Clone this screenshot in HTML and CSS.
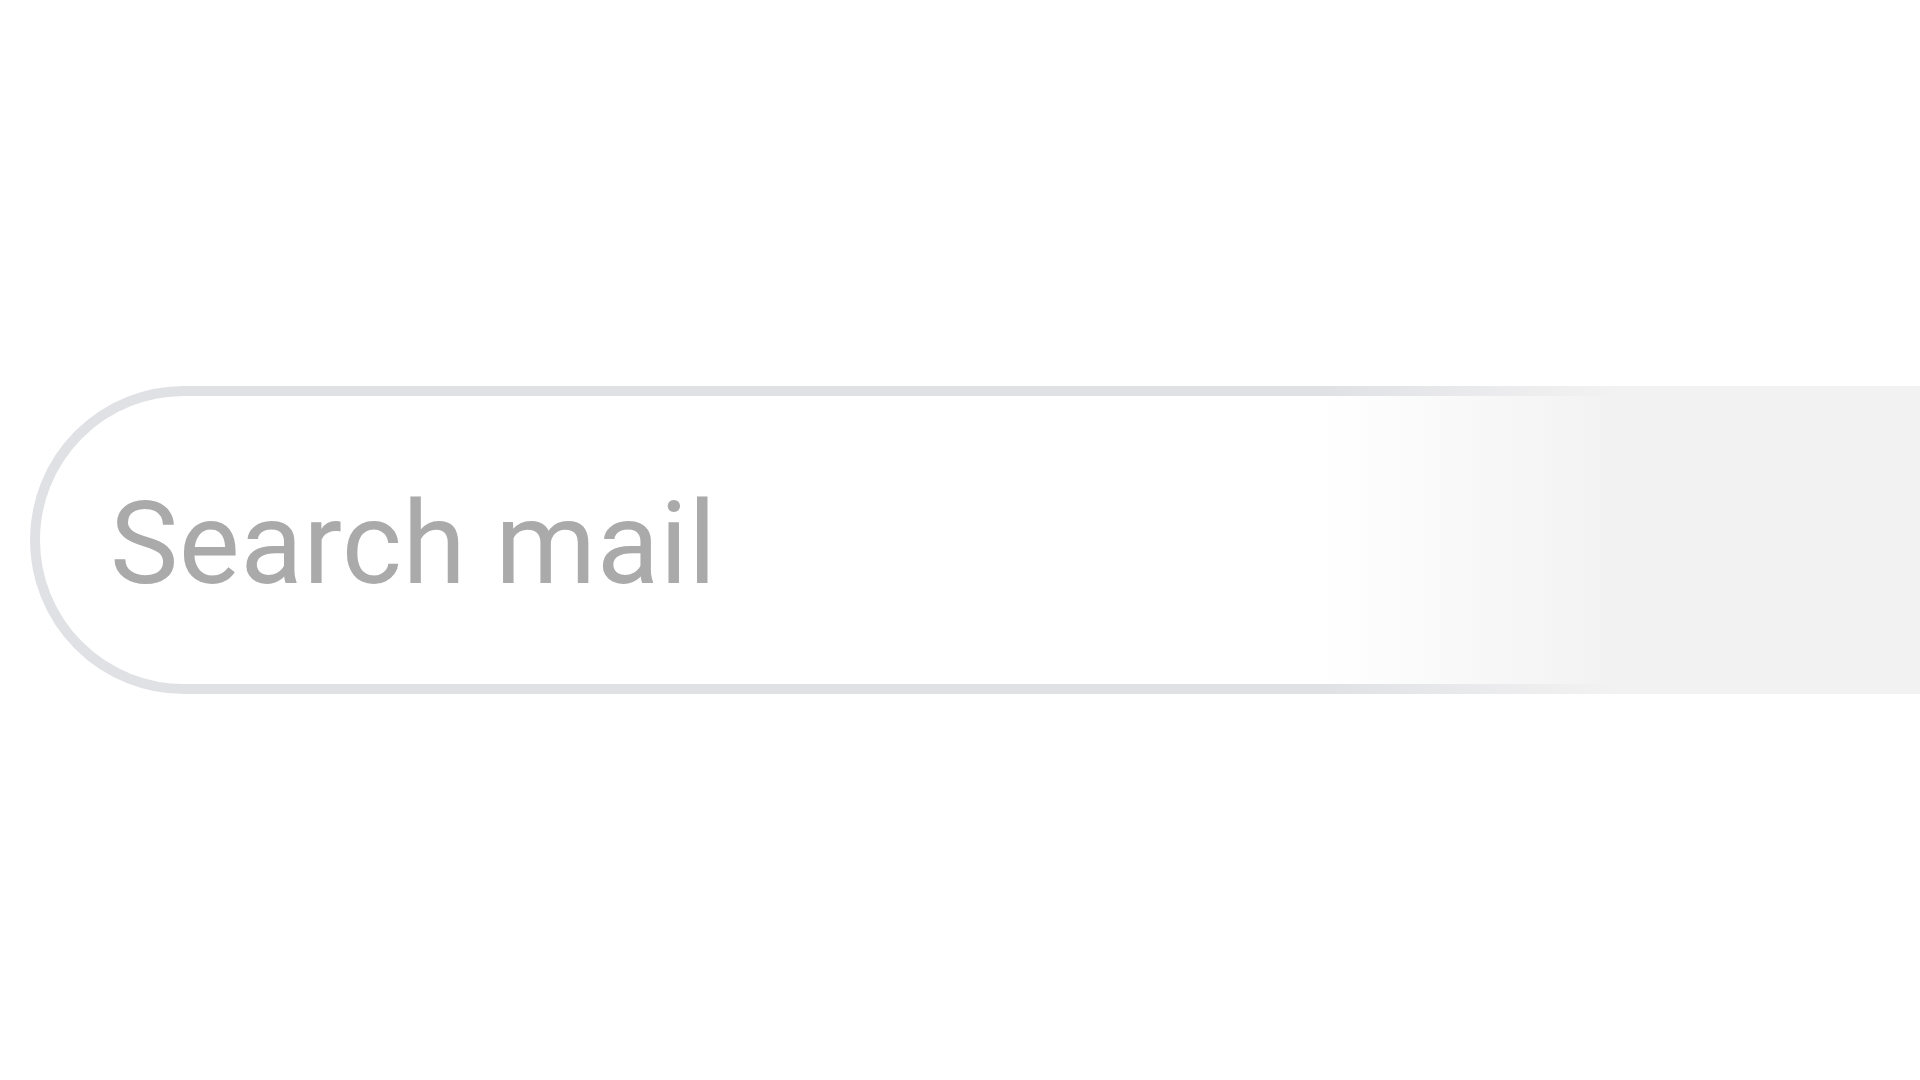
FILE: index.html
```html
<!DOCTYPE html>
<html lang="en">
<head>
<meta charset="utf-8">
<title>Search mail</title>
<link rel="stylesheet" href="styles.css">
</head>
<body>
<main class="stage">
  <div class="search">
    <span class="placeholder">Search mail</span>
  </div>
  <div class="fade"></div>
</main>
</body>
</html>
```

FILE: styles.css
```css
html, body {
  margin: 0;
  padding: 0;
  background: #ffffff;
}
.stage {
  position: relative;
  width: 1920px;
  height: 1080px;
  overflow: hidden;
  display: flex;
  align-items: center;
}
.search {
  box-sizing: border-box;
  margin-left: 30px;
  width: 2000px;
  height: 308px;
  flex-shrink: 0;
  border: 10px solid #e0e1e5;
  border-radius: 154px 0 0 154px;
  background: #ffffff;
  display: flex;
  align-items: center;
  padding-left: 70px;
}
.placeholder {
  font-family: Roboto, "Liberation Sans", sans-serif;
  font-weight: 400;
  font-size: 115px;
  letter-spacing: 0.5px;
  color: #aaaaaa;
  line-height: 1;
  margin-top: 7px;
  white-space: nowrap;
}
.fade {
  position: absolute;
  left: 1320px;
  right: 0;
  top: 386px;
  height: 308px;
  background: linear-gradient(to right, rgba(242,242,242,0) 0px, #f2f2f2 292px, #f2f2f2 100%);
}
```
